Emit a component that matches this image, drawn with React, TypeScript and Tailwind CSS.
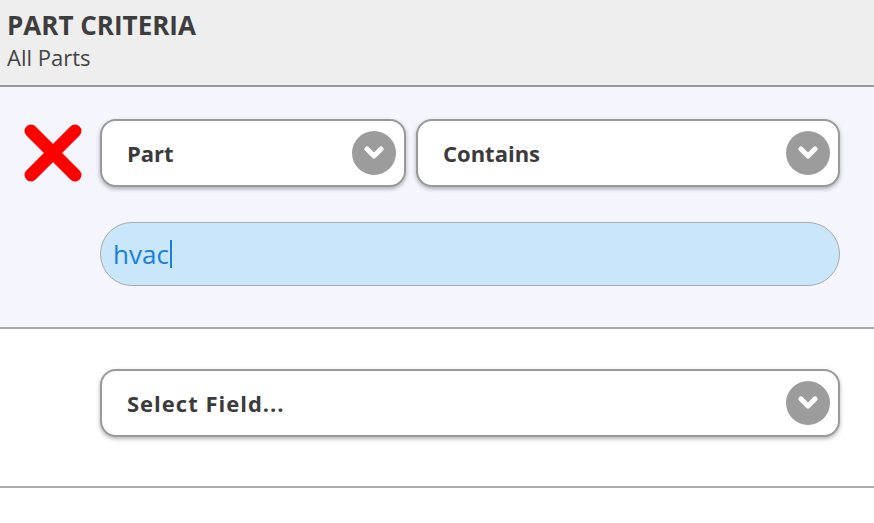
import React from 'react';

const font = { fontFamily: '"Open Sans", "Liberation Sans", sans-serif' };

const Chevron: React.FC = () => (
  <span className="flex h-[44px] w-[44px] shrink-0 items-center justify-center rounded-full bg-[#9c9c9c]">
    <svg width="22" height="14" viewBox="0 0 22 14">
      <path d="M4 3 L11 10 L18 3" fill="none" stroke="#fff" strokeWidth="5" strokeLinecap="round" strokeLinejoin="round" />
    </svg>
  </span>
);

const SelectBox: React.FC<{ label: string; className?: string; labelClass?: string }> = ({ label, className, labelClass }) => (
  <div
    className={`flex h-[68px] items-center justify-between rounded-[16px] border-2 border-[#999] bg-white pl-[25px] pr-[8px] shadow-[0_2px_4px_rgba(0,0,0,0.3)] ${className ?? ''}`}
  >
    <span className={`text-[22px] font-bold text-[#3b3b3b] ${labelClass ?? ''}`}>{label}</span>
    <Chevron />
  </div>
);

const RemoveIcon: React.FC = () => (
  <svg width="58" height="58" viewBox="0 0 58 58">
    <path d="M7 7 L51 51 M51 7 L7 51" stroke="#ff0000" strokeWidth="13" strokeLinecap="round" />
  </svg>
);

export default function App() {
  return (
    <div className="min-h-[523px] w-[874px] bg-white" style={font}>
      <div className="h-[87px] border-b-2 border-[#999] bg-[#eeeeee] px-[7px] pt-[8px]">
        <div className="text-[26px] font-bold leading-[34px] text-[#3d3d3d]">PART CRITERIA</div>
        <div className="text-[22px] leading-[30px] text-[#444]">All Parts</div>
      </div>

      <div className="border-b-2 border-[#aaa] bg-[#f5f5fe] pt-[32px] pb-[41px] pr-[34px]">
        <div className="flex items-center">
          <div className="flex w-[100px] shrink-0 justify-start pl-[24px]">
            <RemoveIcon />
          </div>
          <SelectBox label="Part" className="w-[306px]" />
          <SelectBox label="Contains" className="ml-[10px] flex-1" />
        </div>
        <div className="mt-[35px] pl-[100px]">
          <div className="flex h-[64px] items-center rounded-full border border-[#aaa] bg-[#c9e6fb] pl-[12px]">
            <span className="text-[26px] text-[#1a7fd8]">hvac</span>
            <span className="ml-[1px] h-[28px] w-[2px] bg-[#1a7fd8]" />
          </div>
        </div>
      </div>

      <div className="border-b-2 border-[#aaa] bg-white pt-[40px] pb-[49px] pl-[100px] pr-[34px]">
        <SelectBox label="Select Field..." labelClass="tracking-[1px]" />
      </div>
    </div>
  );
}
